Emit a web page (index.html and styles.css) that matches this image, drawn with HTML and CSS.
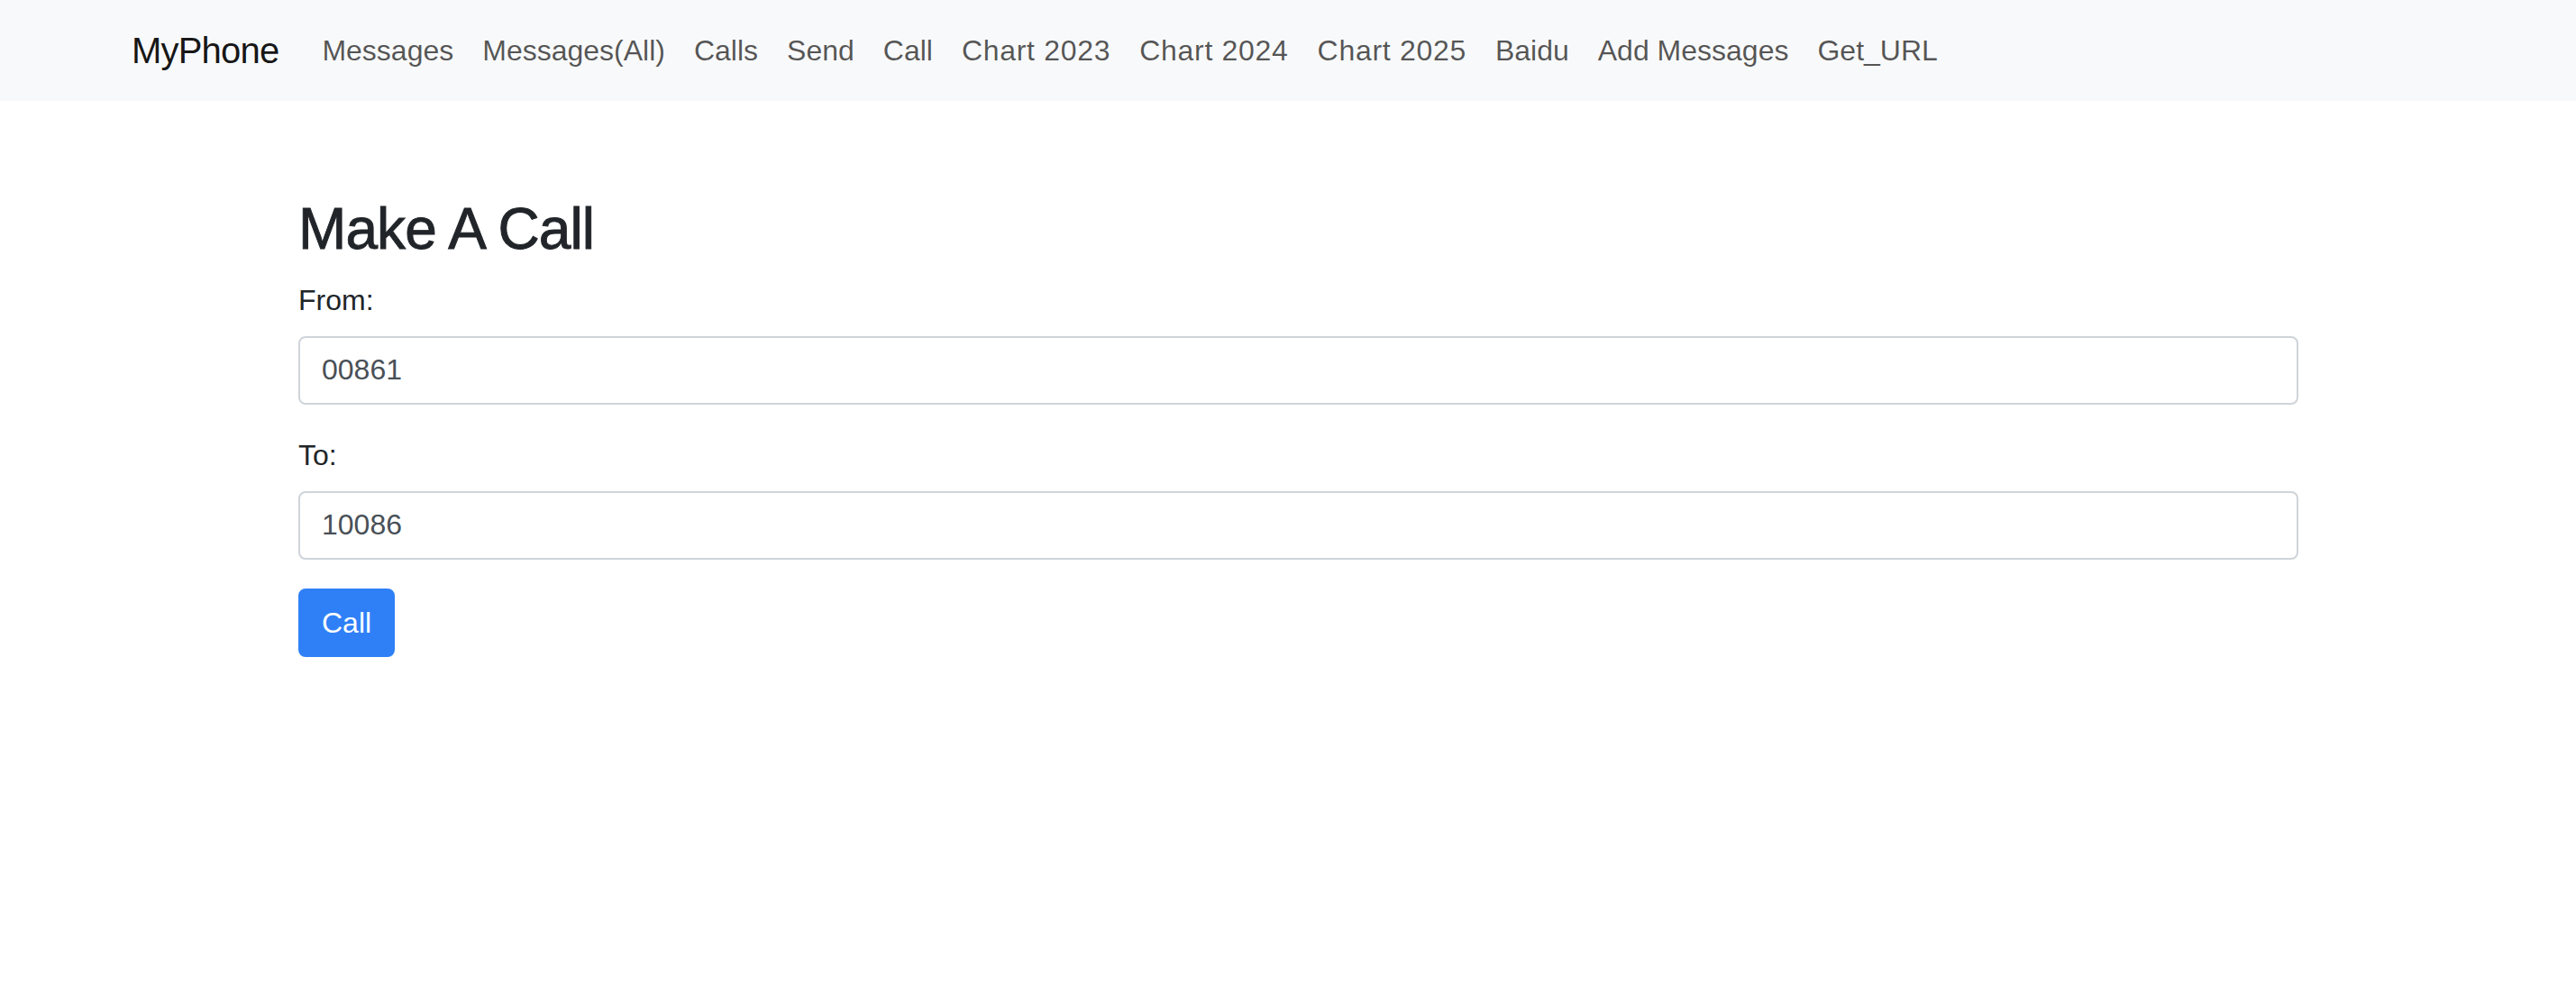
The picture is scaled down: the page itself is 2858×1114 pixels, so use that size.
FILE: index.html
```html
<!DOCTYPE html>
<html lang="en">
<head>
<meta charset="utf-8">
<title>Make A Call</title>
<link rel="stylesheet" href="styles.css">
</head>
<body>
<nav class="navbar">
  <a class="brand" href="#">MyPhone</a>
  <ul class="nav">
    <li><a class="nav-link" href="#">Messages</a></li>
    <li><a class="nav-link" href="#">Messages(All)</a></li>
    <li><a class="nav-link" href="#">Calls</a></li>
    <li><a class="nav-link" href="#">Send</a></li>
    <li><a class="nav-link" href="#">Call</a></li>
    <li><a class="nav-link num" href="#">Chart 2023</a></li>
    <li><a class="nav-link num" href="#">Chart 2024</a></li>
    <li><a class="nav-link num" href="#">Chart 2025</a></li>
    <li><a class="nav-link" href="#">Baidu</a></li>
    <li><a class="nav-link" href="#">Add Messages</a></li>
    <li><a class="nav-link" href="#">Get_URL</a></li>
  </ul>
</nav>
<main class="container">
  <h2 class="title">Make A Call</h2>
  <form class="form">
    <div class="form-group">
      <label class="label" for="from">From:</label>
      <input class="form-control" id="from" type="text" value="00861">
    </div>
    <div class="form-group">
      <label class="label" for="to">To:</label>
      <input class="form-control" id="to" type="text" value="10086">
    </div>
    <button class="btn" type="button">Call</button>
  </form>
</main>
</body>
</html>
```
FILE: styles.css
```css
* { box-sizing: border-box; }
html, body {
  margin: 0;
  padding: 0;
  background: #ffffff;
  font-family: "Liberation Sans", Arial, sans-serif;
  color: #212529;
}
.navbar {
  display: flex;
  align-items: center;
  height: 112px;
  padding: 16px 32px 16px 146px;
  background: #f8f9fa;
}
.brand {
  font-size: 40px;
  line-height: 60px;
  padding: 10px 0;
  margin-right: 32px;
  letter-spacing: -0.8px;
  color: rgba(0, 0, 0, 0.92);
  text-decoration: none;
  white-space: nowrap;
}
.nav {
  display: flex;
  list-style: none;
  margin: 0;
  padding: 0;
}
.nav-link {
  display: block;
  padding: 16px 16px;
  font-size: 32px;
  line-height: 48px;
  color: rgba(0, 0, 0, 0.66);
  text-decoration: none;
  white-space: nowrap;
}
.nav-link.num {
  letter-spacing: 0.7px;
}
.container {
  margin: 0 308px 0 331px;
  padding-top: 104px;
}
.title {
  margin: 0 0 16px 0;
  font-size: 64px;
  line-height: 76.8px;
  font-weight: 400;
  letter-spacing: -0.9px;
  -webkit-text-stroke: 0.9px #212529;
  color: #212529;
}
.form { margin: 0; }
.form-group {
  margin-bottom: 32px;
}
.label {
  display: block;
  margin-bottom: 16px;
  font-size: 32px;
  line-height: 48px;
  color: #212529;
}
.form-control {
  display: block;
  width: 100%;
  height: 76px;
  padding: 12px 24px;
  font-family: "Liberation Sans", Arial, sans-serif;
  font-size: 32px;
  line-height: 48px;
  color: #495057;
  background: #ffffff;
  border: 2px solid #ced4da;
  border-radius: 8px;
  outline: none;
}
.btn {
  display: inline-block;
  height: 76px;
  padding: 12px 24px;
  font-family: "Liberation Sans", Arial, sans-serif;
  font-size: 32px;
  line-height: 48px;
  color: #ffffff;
  background: #2f80f7;
  border: 2px solid #2f80f7;
  border-radius: 8px;
  cursor: pointer;
}
```
